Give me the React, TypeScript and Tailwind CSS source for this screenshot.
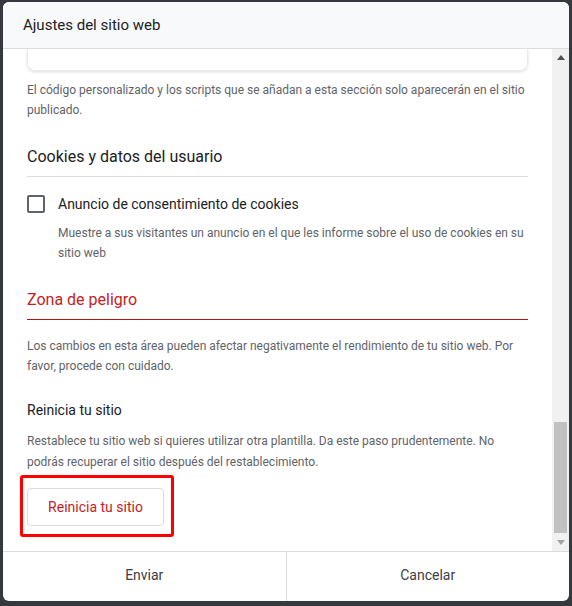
import React from "react";

export default function App() {
  return (
    <div
      className="w-[572px] h-[606px] bg-[#35383d] pt-[2px] px-[3px] pb-[5px]"
      style={{ fontFamily: "Roboto, 'Noto Sans', sans-serif" }}
    >
      <div className="h-[599px] w-[566px] bg-white rounded-[6px] overflow-hidden flex flex-col">
        {/* Header */}
        <div className="h-[47px] shrink-0 bg-[#f8f9fa] border-b border-[#dadce0] px-[20px] flex items-center">
          <span className="text-[15px] text-[#202124]">Ajustes del sitio web</span>
        </div>

        {/* Body */}
        <div className="flex-1 flex min-h-0">
          <div className="flex-1 overflow-hidden pl-[24px] pr-[24px]">
            <div className="h-[22px] rounded-b-[8px] border border-t-0 border-[#e8eaed] shadow-[0_1px_3px_rgba(60,64,67,0.18)]" />
            <p className="mt-[9px] text-[12px] leading-[20px] text-[#5f6368]">
              El código personalizado y los scripts que se añadan a esta sección solo aparecerán en el sitio publicado.
            </p>

            <div className="mt-[25px] pb-[7px] border-b border-[#dadce0]">
              <h2 className="text-[16px] leading-[24px] text-[#202124]">Cookies y datos del usuario</h2>
            </div>

            <div className="mt-[17px] flex gap-[13px]">
              <div className="w-[18px] h-[18px] mt-[1px] shrink-0 rounded-[2px] border-2 border-[#5f6368]" />
              <div>
                <div className="text-[14px] leading-[20px] text-[#202124]">Anuncio de consentimiento de cookies</div>
                <p className="mt-[9px] text-[12px] leading-[20px] text-[#5f6368]">
                  Muestre a sus visitantes un anuncio en el que les informe sobre el uso de cookies en su sitio web
                </p>
              </div>
            </div>

            <div className="mt-[25px] pb-[7px] border-b border-[#b31412]">
              <h2 className="text-[16px] leading-[24px] text-[#c5221f]">Zona de peligro</h2>
            </div>

            <p className="mt-[16px] text-[12px] leading-[20px] text-[#5f6368]">
              Los cambios en esta área pueden afectar negativamente el rendimiento de tu sitio web. Por favor, procede con cuidado.
            </p>

            <h3 className="mt-[24px] text-[14px] leading-[20px] text-[#202124]">Reinicia tu sitio</h3>
            <p className="mt-[11px] text-[12px] leading-[21px] text-[#5f6368]">
              Restablece tu sitio web si quieres utilizar otra plantilla. Da este paso prudentemente. No podrás recuperar el sitio después del restablecimiento.
            </p>

            <div className="mt-[15px] relative inline-block">
              <span className="absolute -left-[7px] -right-[10px] -top-[13px] -bottom-[11px] border-[3px] border-[#ff0000] rounded-[3px]" />
              <button className="w-[137px] h-[38px] rounded-[4px] border border-[#dadce0] bg-white text-[14px] text-[#c5221f]">
                Reinicia tu sitio
              </button>
            </div>
          </div>

          {/* Scrollbar drawing */}
          <div className="w-[17px] shrink-0 bg-[#f1f1f1] flex flex-col items-center">
            <div className="h-[17px] flex items-center justify-center">
              <svg width="8" height="5" viewBox="0 0 8 5">
                <path d="M0 5 L4 0 L8 5 Z" fill="#505050" />
              </svg>
            </div>
            <div className="flex-1 w-full relative">
              <div className="absolute left-[2px] right-[2px] bottom-[1px] h-[111px] bg-[#c1c1c1]" />
            </div>
            <div className="h-[17px] flex items-center justify-center">
              <svg width="8" height="5" viewBox="0 0 8 5">
                <path d="M0 0 L8 0 L4 5 Z" fill="#a3a3a3" />
              </svg>
            </div>
          </div>
        </div>

        {/* Footer */}
        <div className="h-[50px] shrink-0 border-t border-[#dadce0] flex">
          <button className="flex-1 text-[14px] text-[#3c4043] border-r border-[#dadce0] pb-[2px]">Enviar</button>
          <button className="flex-1 text-[14px] text-[#3c4043] pb-[2px]">Cancelar</button>
        </div>
      </div>
    </div>
  );
}
